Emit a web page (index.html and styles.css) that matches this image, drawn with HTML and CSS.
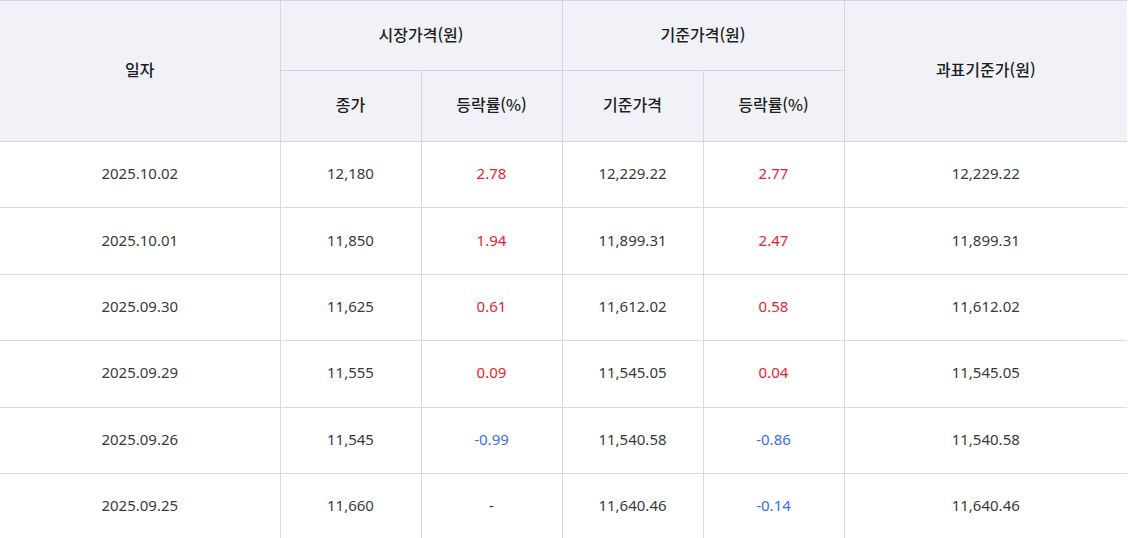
FILE: index.html
```html
<!DOCTYPE html>
<html lang="ko">
<head>
<meta charset="utf-8">
<link rel="stylesheet" href="styles.css">
</head>
<body>
<table class="price-table">
  <colgroup>
    <col class="c-date"><col class="c-num"><col class="c-num"><col class="c-num"><col class="c-num"><col class="c-last">
  </colgroup>
  <thead>
    <tr class="h1">
      <th rowspan="2">일자</th>
      <th colspan="2">시장가격(원)</th>
      <th colspan="2">기준가격(원)</th>
      <th rowspan="2">과표기준가(원)</th>
    </tr>
    <tr class="h2">
      <th>종가</th>
      <th>등락률(%)</th>
      <th>기준가격</th>
      <th>등락률(%)</th>
    </tr>
  </thead>
  <tbody>
    <tr><td>2025.10.02</td><td>12,180</td><td class="up">2.78</td><td>12,229.22</td><td class="up">2.77</td><td>12,229.22</td></tr>
    <tr><td>2025.10.01</td><td>11,850</td><td class="up">1.94</td><td>11,899.31</td><td class="up">2.47</td><td>11,899.31</td></tr>
    <tr><td>2025.09.30</td><td>11,625</td><td class="up">0.61</td><td>11,612.02</td><td class="up">0.58</td><td>11,612.02</td></tr>
    <tr><td>2025.09.29</td><td>11,555</td><td class="up">0.09</td><td>11,545.05</td><td class="up">0.04</td><td>11,545.05</td></tr>
    <tr><td>2025.09.26</td><td>11,545</td><td class="down">-0.99</td><td>11,540.58</td><td class="down">-0.86</td><td>11,540.58</td></tr>
    <tr><td>2025.09.25</td><td>11,660</td><td>-</td><td>11,640.46</td><td class="down">-0.14</td><td>11,640.46</td></tr>
  </tbody>
</table>
</body>
</html>
```
FILE: styles.css
```css
html, body {
  margin: 0;
  padding: 0;
  background: #fff;
}
.price-table {
  width: 1127px;
  border-collapse: collapse;
  table-layout: fixed;
  border-top: 1px solid #d4d6de;
  font-family: "Noto Sans CJK KR", "Noto Sans", sans-serif;
}
.c-date { width: 280px; }
.c-num { width: 141px; }
.c-last { width: 283px; }
.price-table th {
  background: #f1f2f7;
  color: #1e1e1e;
  font-size: 16px;
  font-weight: 500;
  text-align: center;
  vertical-align: middle;
  border: 1px solid #d4d6de;
  padding: 0 0 4px;
  box-sizing: border-box;
}
.price-table tr.h1 th { height: 70px; }
.price-table tr.h2 th { height: 71px; }
.price-table th:first-child,
.price-table td:first-child { border-left: none; }
.price-table th:last-child,
.price-table td:last-child { border-right: none; }
.price-table td {
  height: 66.4px;
  box-sizing: border-box;
  padding: 0 0 3px;
  text-align: center;
  vertical-align: middle;
  font-family: "Noto Sans", sans-serif;
  font-size: 15px;
  color: #3a3a3a;
  border: 1px solid #dcdcdc;
  border-top: none;
}
.price-table td.up { color: #e8242c; }
.price-table td.down { color: #3b6cf2; }
```
